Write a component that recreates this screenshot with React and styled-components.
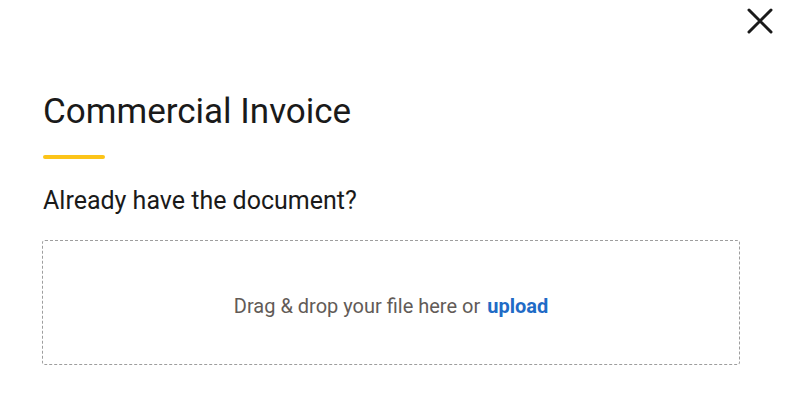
import { styled, createGlobalStyle } from "styled-components";

const GlobalStyle = createGlobalStyle`
  body {
    margin: 0;
    background: #ffffff;
    font-family: Roboto, "Liberation Sans", sans-serif;
  }
`;

const Modal = styled.div`
  position: relative;
  width: 789px;
  height: 406px;
  box-sizing: border-box;
  padding: 91px 49px 0 42px;
  display: flex;
  flex-direction: column;
`;

const CloseButton = styled.button`
  position: absolute;
  top: 8px;
  right: 16px;
  width: 26px;
  height: 26px;
  padding: 0;
  border: none;
  background: none;
  cursor: pointer;
`;

const Title = styled.h1`
  margin: 0 0 0 1px;
  font-size: 35px;
  font-weight: 400;
  line-height: 42px;
  color: #1a1a1a;
`;

const Accent = styled.div`
  width: 62px;
  height: 4px;
  border-radius: 2px;
  background: #fcc419;
  margin: 22px 0 0 1px;
`;

const Question = styled.h2`
  margin: 26px 0 0 1px;
  font-size: 25px;
  font-weight: 400;
  line-height: 32px;
  color: #1a1a1a;
`;

const DropZone = styled.div`
  margin-top: 23px;
  height: 125px;
  box-sizing: border-box;
  border: 1px dashed #9e9e9e;
  border-radius: 3px;
  display: flex;
  align-items: center;
  justify-content: center;
  padding-top: 6px;
  font-size: 20px;
  color: #625b57;
`;

const UploadLink = styled.a`
  margin-left: 7px;
  color: #1f6bc6;
  font-weight: 700;
  text-decoration: none;
  cursor: pointer;
`;

export default function App() {
  return (
    <>
      <GlobalStyle />
      <Modal>
        <CloseButton aria-label="Close">
          <svg width="26" height="26" viewBox="0 0 26 26">
            <path
              d="M2 2L24 24M24 2L2 24"
              stroke="#1a1a1a"
              strokeWidth="3"
              strokeLinecap="round"
            />
          </svg>
        </CloseButton>
        <Title>Commercial Invoice</Title>
        <Accent />
        <Question>Already have the document?</Question>
        <DropZone>
          Drag &amp; drop your file here or
          <UploadLink>upload</UploadLink>
        </DropZone>
      </Modal>
    </>
  );
}
